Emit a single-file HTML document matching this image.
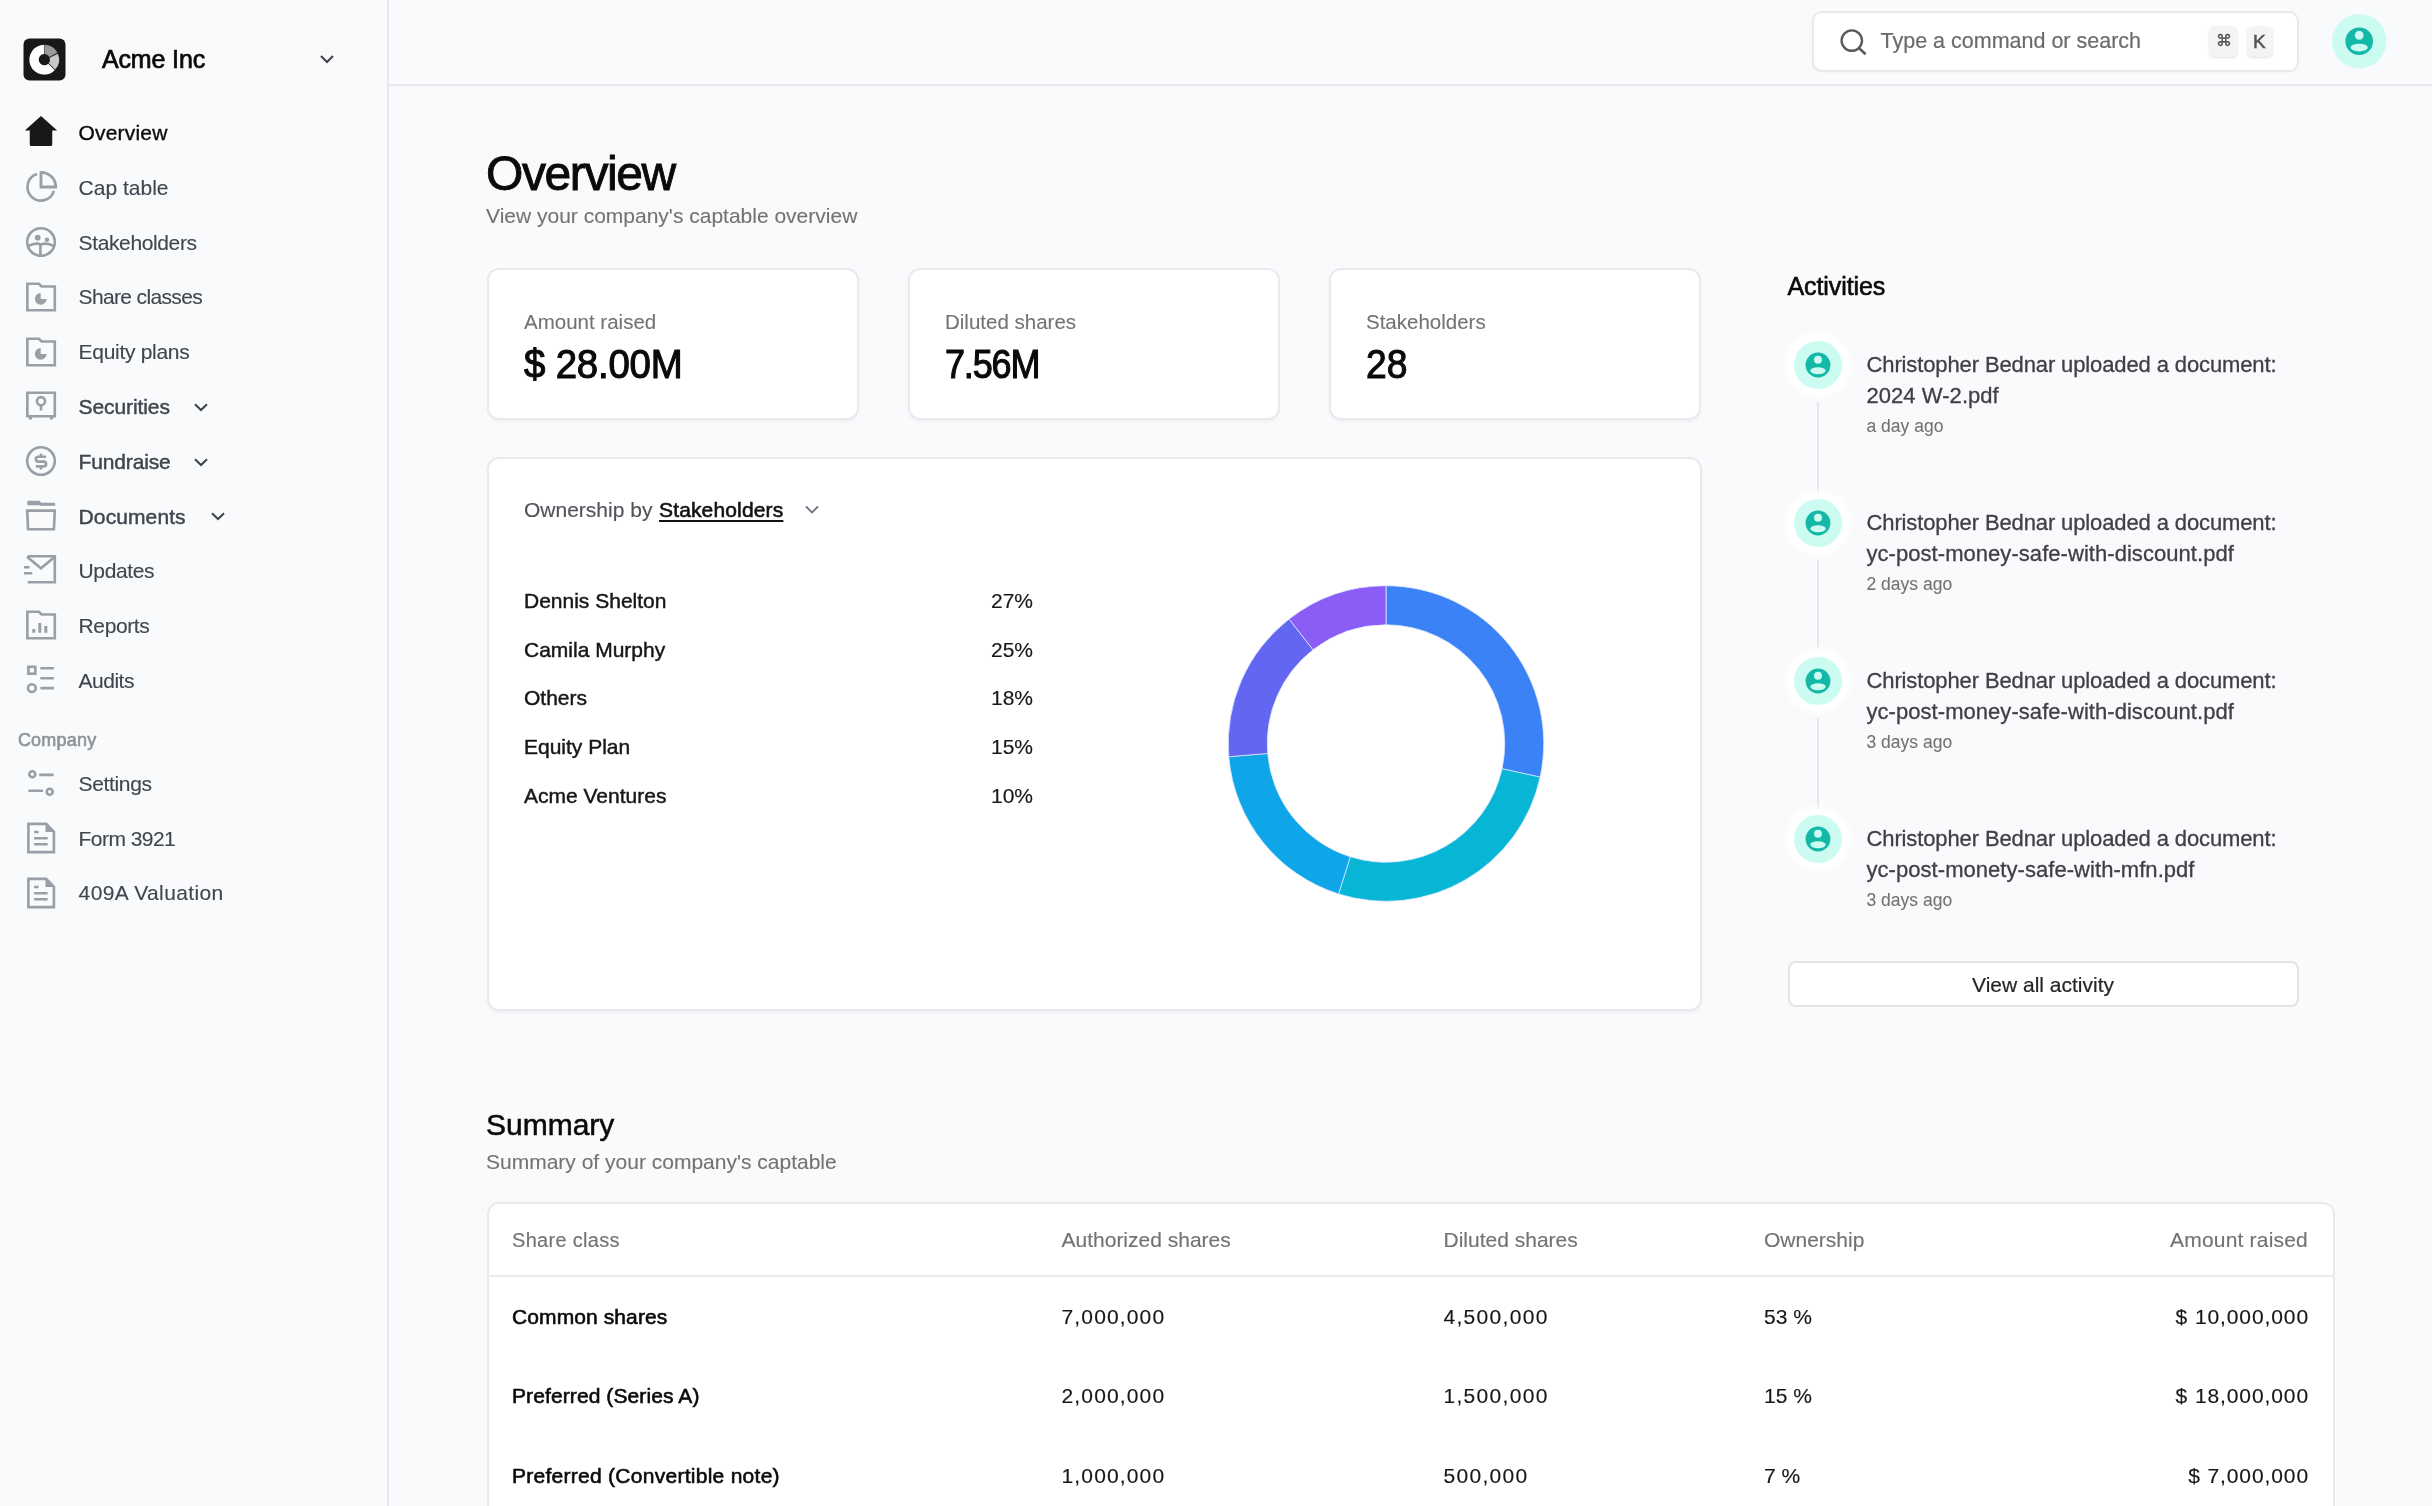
<!DOCTYPE html><html><head><meta charset="utf-8"><title>Overview</title><style>
*{margin:0;padding:0;box-sizing:border-box}
html,body{width:2432px;height:1506px;overflow:hidden;background:#f9fafb;font-family:"Liberation Sans",sans-serif}
.t{position:absolute;line-height:1;white-space:nowrap}
body{will-change:transform}
.abs{position:absolute}
.card{position:absolute;background:#fff;border:2px solid #e9eaee;border-radius:12px;box-shadow:0 2px 3px rgba(0,0,0,0.04)}
svg{position:absolute;overflow:visible}
</style></head><body>
<div class="abs" style="left:387px;top:0;width:2px;height:1506px;background:#e7e8eb"></div>
<div class="abs" style="left:389px;top:84px;width:2043px;height:2px;background:#e7e8eb"></div>
<svg style="left:23px;top:38px" width="43" height="43" viewBox="0 0 43 43">
<rect x="0.5" y="0.5" width="42" height="42" rx="6" fill="#18181b"/>
<g transform="translate(21.3,21.7)">
<path d="M0,-14.9 A14.9,14.9 0 1 0 10.5,10.5 L3.96,3.96 A5.6,5.6 0 1 1 0,-5.6 Z" fill="#fff"/>
<path d="M0.6,-14.9 A14.9,14.9 0 0 1 13.2,-6.9 L5.0,-2.6 A5.6,5.6 0 0 0 0.6,-5.6 Z" fill="#9a9a9a"/>
<path d="M13.6,-6.0 A14.9,14.9 0 0 1 10.9,9.9 L4.4,3.5 A5.6,5.6 0 0 0 5.3,-2.0 Z" fill="#c8c8c8"/>
</g></svg>
<div class="t" style="left:102px;top:47.44px;font-size:25px;color:#0a0a0a;letter-spacing:-0.15px;-webkit-text-stroke:0.7px #0a0a0a;">Acme Inc</div>
<svg style="left:319px;top:54px" width="16" height="12" viewBox="0 0 16 12"><path d="M2,2 L8,8 L14,2" fill="none" stroke="#3f3f46" stroke-width="2"/></svg>
<svg style="left:23.3px;top:114.4px" width="36" height="36" viewBox="0 0 24 24" fill="none" stroke="#18181b" stroke-width="1.75" stroke-linejoin="miter"><path d="M1.2,11 L12,1.3 L22.8,11 L19.5,11 L19.5,20.3 Q19.5,21.3 18.5,21.3 L5.5,21.3 Q4.5,21.3 4.5,20.3 L4.5,11 Z" fill="#18181b" stroke="none"/></svg>
<div class="t" style="left:78.4px;top:122.12px;font-size:21px;color:#0a0a0a;letter-spacing:0.2px;-webkit-text-stroke:0.35px #0a0a0a;">Overview</div>
<svg style="left:23.3px;top:169.2px" width="36" height="36" viewBox="0 0 24 24" fill="none" stroke="#9a9ea6" stroke-width="1.75" stroke-linejoin="miter"><path d="M9.4,3.4 A9,9 0 1 0 20.6,14.6"/><path d="M12,2.2 V12 H21.8 A9.8,9.8 0 0 0 12,2.2 Z" stroke-width="1.9"/></svg>
<div class="t" style="left:78.6px;top:176.92px;font-size:21px;color:#41454f;-webkit-text-stroke:0.12px #41454f;">Cap table</div>
<svg style="left:23.3px;top:223.9px" width="36" height="36" viewBox="0 0 24 24" fill="none" stroke="#9a9ea6" stroke-width="1.75" stroke-linejoin="miter"><circle cx="12" cy="12" r="9.2"/><circle cx="9.8" cy="9.1" r="1.95" fill="#9a9ea6" stroke="none"/><circle cx="16" cy="10.5" r="1.5" fill="#9a9ea6" stroke="none"/><path d="M3.4,14.8 Q8,12.2 12,13.6 Q16,12.2 20.6,14.8"/><path d="M11.6,13.6 V21.2"/></svg>
<div class="t" style="left:78.6px;top:231.62px;font-size:21px;color:#41454f;letter-spacing:-0.38px;-webkit-text-stroke:0.12px #41454f;">Stakeholders</div>
<svg style="left:23.3px;top:278.7px" width="36" height="36" viewBox="0 0 24 24" fill="none" stroke="#9a9ea6" stroke-width="1.75" stroke-linejoin="miter"><path d="M2.9,3.2 H10.6 L12.4,5 H21.2 V20.8 H2.9 Z"/><path d="M11.8,9.4 A3.9,3.9 0 1 0 15.7,13.3 H11.8 Z" fill="#9a9ea6" stroke="none"/></svg>
<div class="t" style="left:78.6px;top:286.42px;font-size:21px;color:#41454f;letter-spacing:-0.65px;-webkit-text-stroke:0.12px #41454f;">Share classes</div>
<svg style="left:23.3px;top:333.5px" width="36" height="36" viewBox="0 0 24 24" fill="none" stroke="#9a9ea6" stroke-width="1.75" stroke-linejoin="miter"><path d="M2.9,3.2 H10.6 L12.4,5 H21.2 V20.8 H2.9 Z"/><path d="M11.8,9.4 A3.9,3.9 0 1 0 15.7,13.3 H11.8 Z" fill="#9a9ea6" stroke="none"/></svg>
<div class="t" style="left:78.6px;top:341.22px;font-size:21px;color:#41454f;letter-spacing:-0.3px;-webkit-text-stroke:0.12px #41454f;">Equity plans</div>
<svg style="left:23.3px;top:388.3px" width="36" height="36" viewBox="0 0 24 24" fill="none" stroke="#9a9ea6" stroke-width="1.75" stroke-linejoin="miter"><path d="M2.9,3.2 H21.2 V18.8 H2.9 Z"/><circle cx="12" cy="8.8" r="2.7"/><path d="M12,11.5 V15"/><path d="M5,18.8 V21 M19,18.8 V21" stroke-width="2.2"/></svg>
<div class="t" style="left:78.6px;top:396.02px;font-size:21px;color:#41454f;letter-spacing:-0.1px;-webkit-text-stroke:0.45px #41454f;">Securities</div>
<svg style="left:194px;top:402.8px" width="14" height="9" viewBox="0 0 14 9"><path d="M1,1.2 L7,7 L13,1.2" fill="none" stroke="#3c4250" stroke-width="2"/></svg>
<svg style="left:23.3px;top:443.0px" width="36" height="36" viewBox="0 0 24 24" fill="none" stroke="#9a9ea6" stroke-width="1.75" stroke-linejoin="miter"><circle cx="12" cy="12" r="9.2"/><path d="M15.4,9.2 H10.2 Q8.6,9.2 8.6,10.8 Q8.6,12.4 10.2,12.4 H13.8 Q15.4,12.4 15.4,14 Q15.4,15.6 13.8,15.6 H8.6 M12,7.2 V9.2 M12,15.6 V17.6"/></svg>
<div class="t" style="left:78.6px;top:450.72px;font-size:21px;color:#41454f;letter-spacing:-0.15px;-webkit-text-stroke:0.45px #41454f;">Fundraise</div>
<svg style="left:194px;top:457.5px" width="14" height="9" viewBox="0 0 14 9"><path d="M1,1.2 L7,7 L13,1.2" fill="none" stroke="#3c4250" stroke-width="2"/></svg>
<svg style="left:23.3px;top:497.8px" width="36" height="36" viewBox="0 0 24 24" fill="none" stroke="#9a9ea6" stroke-width="1.75" stroke-linejoin="miter"><path d="M3,2.8 H10.4 L11.8,4.2 H21.4" stroke-width="2"/><path d="M3,2.2 H10.4 L11.8,3.6 H21.4 V4.8 H3 Z" fill="#9a9ea6" stroke="none"/><path d="M2.8,8.4 H21.2 L20.6,20.8 H3.4 Z"/></svg>
<div class="t" style="left:78.6px;top:505.52px;font-size:21px;color:#41454f;letter-spacing:0.1px;-webkit-text-stroke:0.45px #41454f;">Documents</div>
<svg style="left:210.5px;top:512.3px" width="14" height="9" viewBox="0 0 14 9"><path d="M1,1.2 L7,7 L13,1.2" fill="none" stroke="#3c4250" stroke-width="2"/></svg>
<svg style="left:23.3px;top:552.4px" width="36" height="36" viewBox="0 0 24 24" fill="none" stroke="#9a9ea6" stroke-width="1.75" stroke-linejoin="miter"><path d="M3.2,2.8 H21.2 V20.2 H3.2 M2.6,3.2 L12,10.8 L21.2,3.2"/><path d="M0.6,10.2 H4.4 M0.6,14.2 H6.2" /></svg>
<div class="t" style="left:78.6px;top:560.12px;font-size:21px;color:#41454f;letter-spacing:-0.4px;-webkit-text-stroke:0.12px #41454f;">Updates</div>
<svg style="left:23.3px;top:606.9px" width="36" height="36" viewBox="0 0 24 24" fill="none" stroke="#9a9ea6" stroke-width="1.75" stroke-linejoin="miter"><path d="M2.9,3.2 H10.6 L12.4,5 H21.2 V20.8 H2.9 Z"/><path d="M7.2,14.6 V17.2 M11.2,10.6 V17.2 M15.2,12.6 V17.2" stroke-width="2"/></svg>
<div class="t" style="left:78.6px;top:614.62px;font-size:21px;color:#41454f;letter-spacing:-0.4px;-webkit-text-stroke:0.12px #41454f;">Reports</div>
<svg style="left:23.3px;top:662.0px" width="36" height="36" viewBox="0 0 24 24" fill="none" stroke="#9a9ea6" stroke-width="1.75" stroke-linejoin="miter"><rect x="3.6" y="3.2" width="4.6" height="4.6"/><circle cx="5.9" cy="17.4" r="2.6"/><path d="M11.6,4.2 H20.6 M11.6,10.8 H20.6 M11.6,17.4 H20.6"/></svg>
<div class="t" style="left:78.6px;top:669.72px;font-size:21px;color:#41454f;letter-spacing:-0.5px;-webkit-text-stroke:0.12px #41454f;">Audits</div>
<svg style="left:23.3px;top:765.0px" width="36" height="36" viewBox="0 0 24 24" fill="none" stroke="#9a9ea6" stroke-width="1.75" stroke-linejoin="miter"><circle cx="6.2" cy="6.2" r="2"/><circle cx="17.8" cy="17.8" r="2"/><path d="M10.8,6.6 H20.4 M3.6,17.2 H13.4"/></svg>
<div class="t" style="left:78.6px;top:772.72px;font-size:21px;color:#41454f;letter-spacing:-0.35px;-webkit-text-stroke:0.12px #41454f;">Settings</div>
<svg style="left:23.3px;top:819.8px" width="36" height="36" viewBox="0 0 24 24" fill="none" stroke="#9a9ea6" stroke-width="1.75" stroke-linejoin="miter"><path d="M3.6,2.6 H15.4 L20.6,7.8 V21.4 H3.6 Z"/><path d="M15,2.6 V8 H20.6" fill="#9a9ea6" stroke="none"/><path d="M15.4,2.6 L20.6,7.8 H15.4 Z" fill="#9a9ea6" stroke="none"/><path d="M7.4,8 H10.4 M7.4,12.2 H16.4 M7.4,16.2 H16.4"/></svg>
<div class="t" style="left:78.6px;top:827.52px;font-size:21px;color:#41454f;letter-spacing:-0.55px;-webkit-text-stroke:0.12px #41454f;">Form 3921</div>
<svg style="left:23.3px;top:874.5px" width="36" height="36" viewBox="0 0 24 24" fill="none" stroke="#9a9ea6" stroke-width="1.75" stroke-linejoin="miter"><path d="M3.6,2.6 H15.4 L20.6,7.8 V21.4 H3.6 Z"/><path d="M15,2.6 V8 H20.6" fill="#9a9ea6" stroke="none"/><path d="M15.4,2.6 L20.6,7.8 H15.4 Z" fill="#9a9ea6" stroke="none"/><path d="M7.4,8 H10.4 M7.4,12.2 H16.4 M7.4,16.2 H16.4"/></svg>
<div class="t" style="left:78.6px;top:882.22px;font-size:21px;color:#41454f;letter-spacing:0.38px;-webkit-text-stroke:0.12px #41454f;">409A Valuation</div>
<div class="t" style="left:17.9px;top:731.36px;font-size:18px;color:#8f9399;letter-spacing:0.2px;-webkit-text-stroke:0.6px #8f9399;">Company</div>
<div class="abs" style="left:1812px;top:11px;width:487px;height:61px;background:#fff;border:2px solid #e8e9ec;border-radius:10px;box-shadow:0 1px 2px rgba(0,0,0,0.03)"></div>
<svg style="left:1839px;top:28px" width="30" height="30" viewBox="0 0 30 30"><circle cx="12.8" cy="12.6" r="10.2" fill="none" stroke="#5b5b5b" stroke-width="2.4"/><path d="M20.2,20.2 L26.6,26.2" stroke="#5b5b5b" stroke-width="2.6"/></svg>
<div class="t" style="left:1880.5px;top:30.60px;font-size:21.5px;color:#6b6b6b;-webkit-text-stroke:0.2px #6b6b6b;">Type a command or search</div>
<div class="abs" style="left:2209px;top:26px;width:29px;height:31px;background:#f4f4f5;border-radius:6px;box-shadow:0 1px 2px rgba(0,0,0,0.12)"></div>
<div class="t" style="left:2215.5px;top:33.46px;font-size:16px;color:#555;-webkit-text-stroke:0.3px #555;">&#8984;</div>
<div class="abs" style="left:2247px;top:26px;width:26px;height:31px;background:#f4f4f5;border-radius:6px;box-shadow:0 1px 2px rgba(0,0,0,0.12)"></div>
<div class="t" style="left:2253px;top:32.42px;font-size:19px;color:#555;-webkit-text-stroke:0.5px #555;">K</div>
<svg style="left:2332.3px;top:14.400000000000002px" width="54.4" height="54.4" viewBox="-27.2 -27.2 54.4 54.4"><circle cx="0" cy="0" r="27.2" fill="#ccfbf1"/><circle cx="0" cy="0" r="13.8" fill="#14b8a6"/><circle cx="0" cy="-5.93" r="4.42" fill="#ccfbf1"/><ellipse cx="0" cy="6.35" rx="8.56" ry="3.86" fill="#ccfbf1"/></svg>
<div class="t" style="left:486px;top:149.57px;font-size:48px;color:#0a0a0a;letter-spacing:-1.4px;-webkit-text-stroke:0.9px #0a0a0a;">Overview</div>
<div class="t" style="left:486px;top:205.22px;font-size:21px;color:#737373;-webkit-text-stroke:0.1px #737373;">View your company's captable overview</div>
<div class="card" style="left:487px;top:268px;width:372px;height:152px"></div>
<div class="t" style="left:524px;top:311.65px;font-size:20.5px;color:#737373;-webkit-text-stroke:0.1px #737373;">Amount raised</div>
<div class="t" style="left:524px;top:343.74px;font-size:40px;color:#0a0a0a;letter-spacing:-0.2px;-webkit-text-stroke:1.1px #0a0a0a;transform:scaleX(0.96);transform-origin:0 0;">$ 28.00M</div>
<div class="card" style="left:908px;top:268px;width:372px;height:152px"></div>
<div class="t" style="left:945px;top:311.65px;font-size:20.5px;color:#737373;-webkit-text-stroke:0.1px #737373;">Diluted shares</div>
<div class="t" style="left:945px;top:343.74px;font-size:40px;color:#0a0a0a;letter-spacing:-1.3px;-webkit-text-stroke:1.1px #0a0a0a;transform:scaleX(0.9);transform-origin:0 0;">7.56M</div>
<div class="card" style="left:1329px;top:268px;width:372px;height:152px"></div>
<div class="t" style="left:1366px;top:311.65px;font-size:20.5px;color:#737373;-webkit-text-stroke:0.1px #737373;">Stakeholders</div>
<div class="t" style="left:1366px;top:343.74px;font-size:40px;color:#0a0a0a;-webkit-text-stroke:1.1px #0a0a0a;transform:scaleX(0.93);transform-origin:0 0;">28</div>
<div class="card" style="left:487px;top:457px;width:1215px;height:554px"></div>
<div class="t" style="left:524px;top:498.82px;font-size:21px;color:#52525b;-webkit-text-stroke:0.15px #52525b;">Ownership by</div>
<div class="t" style="left:659px;top:498.82px;font-size:21px;color:#111;letter-spacing:0.15px;-webkit-text-stroke:0.6px #111;text-decoration:underline;text-underline-offset:3px;text-decoration-thickness:2px;">Stakeholders</div>
<svg style="left:804px;top:504px" width="16" height="12" viewBox="0 0 16 12"><path d="M2,2.5 L8,8.5 L14,2.5" fill="none" stroke="#6b7280" stroke-width="1.8"/></svg>
<div class="t" style="left:524px;top:590.12px;font-size:21px;color:#171717;-webkit-text-stroke:0.45px #171717;">Dennis Shelton</div>
<div class="t" style="right:1399px;top:590.12px;font-size:21px;color:#171717;-webkit-text-stroke:0.15px #171717;">27%</div>
<div class="t" style="left:524px;top:638.72px;font-size:21px;color:#171717;-webkit-text-stroke:0.45px #171717;">Camila Murphy</div>
<div class="t" style="right:1399px;top:638.72px;font-size:21px;color:#171717;-webkit-text-stroke:0.15px #171717;">25%</div>
<div class="t" style="left:524px;top:687.32px;font-size:21px;color:#171717;-webkit-text-stroke:0.45px #171717;">Others</div>
<div class="t" style="right:1399px;top:687.32px;font-size:21px;color:#171717;-webkit-text-stroke:0.15px #171717;">18%</div>
<div class="t" style="left:524px;top:735.92px;font-size:21px;color:#171717;-webkit-text-stroke:0.45px #171717;">Equity Plan</div>
<div class="t" style="right:1399px;top:735.92px;font-size:21px;color:#171717;-webkit-text-stroke:0.15px #171717;">15%</div>
<div class="t" style="left:524px;top:784.52px;font-size:21px;color:#171717;-webkit-text-stroke:0.45px #171717;">Acme Ventures</div>
<div class="t" style="right:1399px;top:784.52px;font-size:21px;color:#171717;-webkit-text-stroke:0.15px #171717;">10%</div>
<svg style="left:0;top:0" width="2432" height="1506" viewBox="0 0 2432 1506"><path d="M1386.00,585.75 A157.75,157.75 0 0 1 1540.13,777.11 L1502.02,768.80 A118.75,118.75 0 0 0 1386.00,624.75 Z" fill="#3b82f6" stroke="#dbe7ff" stroke-width="0.8"/><path d="M1540.13,777.11 A157.75,157.75 0 0 1 1338.56,893.95 L1350.29,856.75 A118.75,118.75 0 0 0 1502.02,768.80 Z" fill="#06b6d4" stroke="#dbe7ff" stroke-width="0.8"/><path d="M1338.56,893.95 A157.75,157.75 0 0 1 1228.80,756.70 L1267.67,753.44 A118.75,118.75 0 0 0 1350.29,856.75 Z" fill="#0ea5e9" stroke="#dbe7ff" stroke-width="0.8"/><path d="M1228.80,756.70 A157.75,157.75 0 0 1 1289.10,619.02 L1313.05,649.80 A118.75,118.75 0 0 0 1267.67,753.44 Z" fill="#6366f1" stroke="#dbe7ff" stroke-width="0.8"/><path d="M1289.10,619.02 A157.75,157.75 0 0 1 1386.00,585.75 L1386.00,624.75 A118.75,118.75 0 0 0 1313.05,649.80 Z" fill="#8b5cf6" stroke="#dbe7ff" stroke-width="0.8"/></svg>
<div class="t" style="left:1787.5px;top:274.24px;font-size:25px;color:#0a0a0a;letter-spacing:-0.1px;-webkit-text-stroke:0.6px #0a0a0a;">Activities</div>
<div class="abs" style="left:1817.4px;top:402px;width:2px;height:120px;background:#e5e7eb"></div>
<div class="abs" style="left:1782.4px;top:329.0px;width:72px;height:72px;border-radius:50%;background:radial-gradient(circle, #fff 0, #fff 29px, rgba(255,255,255,0) 36px)"></div>
<svg style="left:1794.4px;top:341.0px" width="48.0" height="48.0" viewBox="-24.0 -24.0 48.0 48.0"><circle cx="0" cy="0" r="24.0" fill="#ccfbf1"/><circle cx="0" cy="0" r="12.4" fill="#14b8a6"/><circle cx="0" cy="-5.33" r="3.97" fill="#ccfbf1"/><ellipse cx="0" cy="5.70" rx="7.69" ry="3.47" fill="#ccfbf1"/></svg>
<div class="t" style="left:1866.5px;top:354.08px;font-size:22px;color:#3f3f46;letter-spacing:-0.12px;-webkit-text-stroke:0.3px #3f3f46;">Christopher Bednar uploaded a document:</div>
<div class="t" style="left:1866.5px;top:384.58px;font-size:22px;color:#3f3f46;letter-spacing:0.05px;-webkit-text-stroke:0.3px #3f3f46;">2024 W-2.pdf</div>
<div class="t" style="left:1866.5px;top:418.29px;font-size:17.5px;color:#737373;-webkit-text-stroke:0.1px #737373;">a day ago</div>
<div class="abs" style="left:1817.4px;top:560px;width:2px;height:120px;background:#e5e7eb"></div>
<div class="abs" style="left:1782.4px;top:487.0px;width:72px;height:72px;border-radius:50%;background:radial-gradient(circle, #fff 0, #fff 29px, rgba(255,255,255,0) 36px)"></div>
<svg style="left:1794.4px;top:499.0px" width="48.0" height="48.0" viewBox="-24.0 -24.0 48.0 48.0"><circle cx="0" cy="0" r="24.0" fill="#ccfbf1"/><circle cx="0" cy="0" r="12.4" fill="#14b8a6"/><circle cx="0" cy="-5.33" r="3.97" fill="#ccfbf1"/><ellipse cx="0" cy="5.70" rx="7.69" ry="3.47" fill="#ccfbf1"/></svg>
<div class="t" style="left:1866.5px;top:512.08px;font-size:22px;color:#3f3f46;letter-spacing:-0.12px;-webkit-text-stroke:0.3px #3f3f46;">Christopher Bednar uploaded a document:</div>
<div class="t" style="left:1866.5px;top:542.58px;font-size:22px;color:#3f3f46;letter-spacing:0.05px;-webkit-text-stroke:0.3px #3f3f46;">yc-post-money-safe-with-discount.pdf</div>
<div class="t" style="left:1866.5px;top:576.29px;font-size:17.5px;color:#737373;-webkit-text-stroke:0.1px #737373;">2 days ago</div>
<div class="abs" style="left:1817.4px;top:718px;width:2px;height:120px;background:#e5e7eb"></div>
<div class="abs" style="left:1782.4px;top:645.0px;width:72px;height:72px;border-radius:50%;background:radial-gradient(circle, #fff 0, #fff 29px, rgba(255,255,255,0) 36px)"></div>
<svg style="left:1794.4px;top:657.0px" width="48.0" height="48.0" viewBox="-24.0 -24.0 48.0 48.0"><circle cx="0" cy="0" r="24.0" fill="#ccfbf1"/><circle cx="0" cy="0" r="12.4" fill="#14b8a6"/><circle cx="0" cy="-5.33" r="3.97" fill="#ccfbf1"/><ellipse cx="0" cy="5.70" rx="7.69" ry="3.47" fill="#ccfbf1"/></svg>
<div class="t" style="left:1866.5px;top:670.08px;font-size:22px;color:#3f3f46;letter-spacing:-0.12px;-webkit-text-stroke:0.3px #3f3f46;">Christopher Bednar uploaded a document:</div>
<div class="t" style="left:1866.5px;top:700.58px;font-size:22px;color:#3f3f46;letter-spacing:0.05px;-webkit-text-stroke:0.3px #3f3f46;">yc-post-money-safe-with-discount.pdf</div>
<div class="t" style="left:1866.5px;top:734.29px;font-size:17.5px;color:#737373;-webkit-text-stroke:0.1px #737373;">3 days ago</div>
<div class="abs" style="left:1782.4px;top:803.0px;width:72px;height:72px;border-radius:50%;background:radial-gradient(circle, #fff 0, #fff 29px, rgba(255,255,255,0) 36px)"></div>
<svg style="left:1794.4px;top:815.0px" width="48.0" height="48.0" viewBox="-24.0 -24.0 48.0 48.0"><circle cx="0" cy="0" r="24.0" fill="#ccfbf1"/><circle cx="0" cy="0" r="12.4" fill="#14b8a6"/><circle cx="0" cy="-5.33" r="3.97" fill="#ccfbf1"/><ellipse cx="0" cy="5.70" rx="7.69" ry="3.47" fill="#ccfbf1"/></svg>
<div class="t" style="left:1866.5px;top:828.08px;font-size:22px;color:#3f3f46;letter-spacing:-0.12px;-webkit-text-stroke:0.3px #3f3f46;">Christopher Bednar uploaded a document:</div>
<div class="t" style="left:1866.5px;top:858.58px;font-size:22px;color:#3f3f46;letter-spacing:0.05px;-webkit-text-stroke:0.3px #3f3f46;">yc-post-monety-safe-with-mfn.pdf</div>
<div class="t" style="left:1866.5px;top:892.29px;font-size:17.5px;color:#737373;-webkit-text-stroke:0.1px #737373;">3 days ago</div>
<div class="abs" style="left:1788px;top:961px;width:511px;height:46px;background:#fff;border:2px solid #e4e4e7;border-radius:8px"></div>
<div class="t" style="left:1972px;top:974.02px;font-size:21px;color:#262626;-webkit-text-stroke:0.2px #262626;">View all activity</div>
<div class="t" style="left:486px;top:1110.01px;font-size:30px;color:#0a0a0a;-webkit-text-stroke:0.55px #0a0a0a;">Summary</div>
<div class="t" style="left:486px;top:1151.22px;font-size:21px;color:#737373;-webkit-text-stroke:0.1px #737373;">Summary of your company's captable</div>
<div class="card" style="left:487px;top:1202px;width:1848px;height:400px;box-shadow:none"></div>
<div class="abs" style="left:489px;top:1275px;width:1844px;height:2px;background:#ebebee"></div>
<div class="t" style="left:512px;top:1229.67px;font-size:20px;color:#737373;letter-spacing:0.3px;-webkit-text-stroke:0.15px #737373;">Share class</div>
<div class="t" style="left:1061.5px;top:1228.82px;font-size:21px;color:#737373;-webkit-text-stroke:0.15px #737373;">Authorized shares</div>
<div class="t" style="left:1443.5px;top:1228.82px;font-size:21px;color:#737373;-webkit-text-stroke:0.15px #737373;">Diluted shares</div>
<div class="t" style="left:1764px;top:1228.82px;font-size:21px;color:#737373;-webkit-text-stroke:0.15px #737373;">Ownership</div>
<div class="t" style="right:124px;top:1228.82px;font-size:21px;color:#737373;letter-spacing:0.2px;-webkit-text-stroke:0.15px #737373;">Amount raised</div>
<div class="t" style="left:512px;top:1306.22px;font-size:21px;color:#0a0a0a;letter-spacing:0.1px;-webkit-text-stroke:0.6px #0a0a0a;">Common shares</div>
<div class="t" style="left:1061.5px;top:1306.22px;font-size:21px;color:#171717;letter-spacing:1.15px;-webkit-text-stroke:0.15px #171717;">7,000,000</div>
<div class="t" style="left:1443.5px;top:1306.22px;font-size:21px;color:#171717;letter-spacing:1.3px;-webkit-text-stroke:0.15px #171717;">4,500,000</div>
<div class="t" style="left:1764px;top:1306.22px;font-size:21px;color:#171717;-webkit-text-stroke:0.15px #171717;">53 %</div>
<div class="t" style="right:123px;top:1306.22px;font-size:21px;color:#171717;letter-spacing:0.9px;-webkit-text-stroke:0.15px #171717;">$ 10,000,000</div>
<div class="t" style="left:512px;top:1385.42px;font-size:21px;color:#0a0a0a;letter-spacing:0.1px;-webkit-text-stroke:0.6px #0a0a0a;">Preferred (Series A)</div>
<div class="t" style="left:1061.5px;top:1385.42px;font-size:21px;color:#171717;letter-spacing:1.15px;-webkit-text-stroke:0.15px #171717;">2,000,000</div>
<div class="t" style="left:1443.5px;top:1385.42px;font-size:21px;color:#171717;letter-spacing:1.3px;-webkit-text-stroke:0.15px #171717;">1,500,000</div>
<div class="t" style="left:1764px;top:1385.42px;font-size:21px;color:#171717;-webkit-text-stroke:0.15px #171717;">15 %</div>
<div class="t" style="right:123px;top:1385.42px;font-size:21px;color:#171717;letter-spacing:0.9px;-webkit-text-stroke:0.15px #171717;">$ 18,000,000</div>
<div class="t" style="left:512px;top:1464.62px;font-size:21px;color:#0a0a0a;letter-spacing:0.27px;-webkit-text-stroke:0.6px #0a0a0a;">Preferred (Convertible note)</div>
<div class="t" style="left:1061.5px;top:1464.62px;font-size:21px;color:#171717;letter-spacing:1.15px;-webkit-text-stroke:0.15px #171717;">1,000,000</div>
<div class="t" style="left:1443.5px;top:1464.62px;font-size:21px;color:#171717;letter-spacing:1.3px;-webkit-text-stroke:0.15px #171717;">500,000</div>
<div class="t" style="left:1764px;top:1464.62px;font-size:21px;color:#171717;-webkit-text-stroke:0.15px #171717;">7 %</div>
<div class="t" style="right:123px;top:1464.62px;font-size:21px;color:#171717;letter-spacing:0.9px;-webkit-text-stroke:0.15px #171717;">$ 7,000,000</div>
</body></html>
